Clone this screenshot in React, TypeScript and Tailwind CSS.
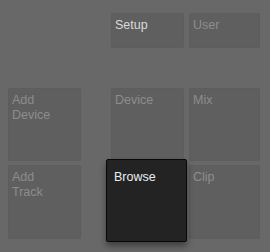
const font = { fontFamily: '"Liberation Sans", Arial, sans-serif' };

interface PadProps {
  label: string[];
  bright?: boolean;
}

function Pad({ label, bright }: PadProps) {
  return (
    <div
      className={`h-full bg-[#5f5f5f] border border-[#5d5d5d] rounded-[1px] pl-[3px] pt-[4px] text-[12.5px] leading-[15px] ${
        bright ? 'text-[#dadada]' : 'text-[#8d8d8d]'
      }`}
    >
      {label.map((l) => (
        <div key={l}>{l}</div>
      ))}
    </div>
  );
}

export default function App() {
  return (
    <div className="w-[270px] h-[252px] bg-[#686868] overflow-hidden pl-[8px] pt-[13px]" style={font}>
      {/* oberste Reihe: nur Setup / User */}
      <div className="grid grid-cols-[73px_20px_73px_71px] gap-x-[5px] h-[35px]">
        <div />
        <div />
        <Pad label={['Setup']} bright />
        <Pad label={['User']} />
      </div>

      <div className="grid grid-cols-[73px_20px_73px_71px] gap-x-[5px] h-[73px] mt-[40px]">
        <Pad label={['Add', 'Device']} />
        <div />
        <Pad label={['Device']} />
        <Pad label={['Mix']} />
      </div>

      <div className="grid grid-cols-[73px_20px_73px_71px] gap-x-[5px] h-[74px] mt-[4px]">
        <Pad label={['Add', 'Track']} />
        <div />
        {/* aktiver Button, etwas größer mit Schatten */}
        <div className="relative z-10 -ml-[5px] -mr-[3px] -mt-[6px] -mb-[3px] bg-[#232323] border border-[#080808] rounded-[2px] pl-[7px] pt-[10px] text-[12.5px] leading-[15px] text-[#e8eef6] shadow-[0_4px_6px_rgba(0,0,0,0.4)]">
          Browse
        </div>
        <Pad label={['Clip']} />
      </div>
    </div>
  );
}
